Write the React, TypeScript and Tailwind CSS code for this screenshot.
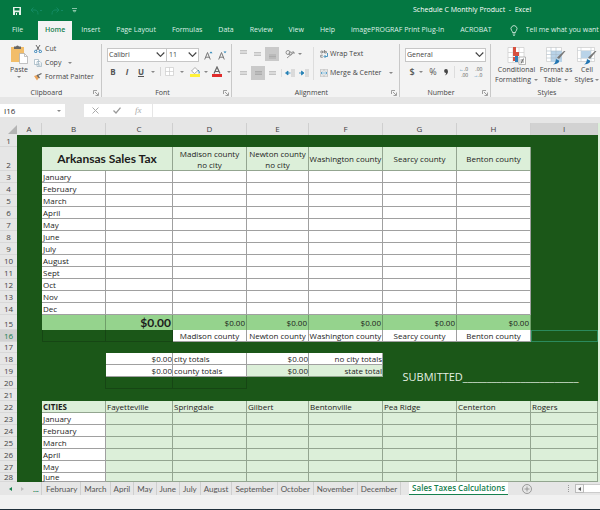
import type { ReactNode } from "react"

const ribbonTabs = [
  "File",
  "Home",
  "Insert",
  "Page Layout",
  "Formulas",
  "Data",
  "Review",
  "View",
  "Help",
  "imagePROGRAF Print Plug-In",
  "ACROBAT",
]

const sheetTabs = [
  "February",
  "March",
  "April",
  "May",
  "June",
  "July",
  "August",
  "September",
  "October",
  "November",
  "December",
]

const months = [
  "January",
  "February",
  "March",
  "April",
  "May",
  "June",
  "July",
  "August",
  "Sept",
  "Oct",
  "Nov",
  "Dec",
]

const columns = ["A", "B", "C", "D", "E", "F", "G", "H", "I"]

const counties = [
  "Madison county",
  "Newton county",
  "Washington county",
  "Searcy county",
  "Benton county",
]

const cities = [
  "Fayetteville",
  "Springdale",
  "Gilbert",
  "Bentonville",
  "Pea Ridge",
  "Centerton",
  "Rogers",
]

const grid = "border-r border-b border-[#a0a0a0]"
const greenGrid = "border-r border-b border-[#93a590] bg-[#dcefd9]"

function Launcher() {
  return (
    <svg className="size-[6px]" viewBox="0 0 6 6" fill="none" stroke="#888">
      <path d="M.5 4V.5H4M2 2l3 3M5.500 2.500v3h-3" strokeWidth=".8" />
    </svg>
  )
}

function Caret() {
  return (
    <svg className="h-[2px] w-[4px] shrink-0 fill-[#888]" viewBox="0 0 4 2">
      <path d="M0 0h4L2 2z" />
    </svg>
  )
}

function Chevron() {
  return (
    <svg
      className="pointer-events-none absolute top-1 right-[2px] h-[5px] w-[9px]"
      viewBox="0 0 9 5"
      fill="none"
      stroke="#444"
      strokeWidth="1.200"
    >
      <path d="M.7.5 4.500 4.300 8.300.5" />
    </svg>
  )
}

type GroupProps = {
  label: string
  className: string
  launcher?: boolean
  children: ReactNode
}

function Group({ label, className, launcher = true, children }: GroupProps) {
  return (
    <section
      aria-label={label}
      className={`flex shrink-0 flex-col border-r border-[#c8c8c8] ${className}`}
    >
      <div className="flex-1">{children}</div>
      <div className="flex h-[9px] items-center pr-[2px]">
        <span className="flex-1 text-center">{label}</span>
        {launcher ? (
          <button aria-label={`${label} settings`}>
            <Launcher />
          </button>
        ) : null}
      </div>
    </section>
  )
}

function AlignIcon({ y = 0 }: { y?: number }) {
  return (
    <svg className="size-[9px]" viewBox="0 0 9 9" stroke="#bdbdbd" strokeWidth=".9">
      <path d={`M1 ${2.5 + y}h7M1 ${4 + y}h7M1 ${5.5 + y}h7`} />
    </svg>
  )
}

function IndentIcon({ flip = false }: { flip?: boolean }) {
  return (
    <svg className="h-[8px] w-[10px]" viewBox="0 0 10 8">
      <path d="M6 1h4M6 3h4M6 5h4M6 7h4" stroke="#bdbdbd" strokeWidth=".9" />
      <path
        d={flip ? "M0 4h3M2.500 2 5 4 2.500 6z" : "M5.500 4H3M3 2 .5 4 3 6z"}
        fill="#2380b5"
        stroke="#2380b5"
        strokeWidth=".8"
      />
    </svg>
  )
}

function FontSizeIcon({ shrink = false }: { shrink?: boolean }) {
  return (
    <svg className="h-[9px] w-[9px]" viewBox="0 0 9 9">
      <path d="M.7 8.500 3.500 1.500l2.800 7M1.700 6.200h3.600" fill="none" stroke="#777" />
      <path d={shrink ? "M5.500.5h3L7 2.200z" : "M5.500 2.200h3L7 .5z"} fill="#2380b5" />
    </svg>
  )
}

function TitleBar() {
  return (
    <header className="flex h-[21px] shrink-0 items-center text-[7px] text-white">
      <div className="flex w-[413px] items-center gap-[9px] pl-[13px]">
        <button aria-label="Save">
          <svg className="size-[8px]" viewBox="0 0 8 8">
            <path d="M0 0h8v8H0z" fill="#e5f3eb" />
            <path d="M1.500 1h5v2.600h-5zM2 5.200h4V8H2z" fill="#047842" />
            <path d="M3 6h1v2H3z" fill="#e5f3eb" />
          </svg>
        </button>
        <button aria-label="Undo">
          <svg className="h-[8px] w-[12px]" viewBox="0 0 12 8" fill="none" stroke="#138a62">
            <path d="M3.500.5 1 3l2.500 2.500M1 3h4q3 0 3 4.500M10 3.500h2" />
          </svg>
        </button>
        <button aria-label="Redo">
          <svg className="h-[8px] w-[12px]" viewBox="0 0 12 8" fill="none" stroke="#138a62">
            <path d="M5.500.5 8 3 5.500 5.500M8 3H4Q1 3 1 7.500M10 3.500h2" />
          </svg>
        </button>
        <button aria-label="Customize toolbar">
          <svg className="size-[5px]" viewBox="0 0 5 5" fill="none" stroke="#a9d8c0">
            <path d="M0 .5h5M1 2.500h3L2.500 4.200z" strokeWidth=".8" />
          </svg>
        </button>
      </div>
      <h1 className="whitespace-pre">Schedule C Monthly Product  -  Excel</h1>
    </header>
  )
}

function RibbonTabs() {
  return (
    <nav className="flex h-[19px] shrink-0 items-stretch overflow-hidden pl-1 text-[7px] whitespace-nowrap text-[#dff0e7]">
      {ribbonTabs.map((tab) => (
        <button
          key={tab}
          className={
            tab === "Home"
              ? "mr-[1px] ml-[7px] bg-[#f3f3f3] px-[7px] font-semibold text-[#16804e]"
              : "px-2"
          }
        >
          {tab}
        </button>
      ))}
      <label className="flex min-w-0 flex-1 items-center gap-2 pl-[10px]">
        <svg className="h-[11px] w-[8px] shrink-0" viewBox="0 0 8 11" fill="none" stroke="#e5f3eb">
          <path d="M2.500 7.500Q2.500 6.300 1.500 5.300A3 3 0 1 1 6.500 5.300Q5.500 6.300 5.500 7.500zM2.700 9h2.600M3.200 10.400h1.600" strokeWidth=".8" />
        </svg>
        <input
          aria-label="Tell me"
          defaultValue="Tell me what you want"
          className="min-w-0 flex-1 outline-none"
        />
      </label>
    </nav>
  )
}

function Ribbon() {
  return (
    <div className="flex h-[57px] shrink-0 overflow-hidden bg-[#f3f3f3] pt-1 text-[7px] leading-[10px] whitespace-nowrap text-[#444]">
      <Group label="Clipboard" className="w-[102px]">
        <div className="flex gap-1 pl-2">
          <button className="flex w-[22px] flex-col items-center pt-[1px]">
            <svg className="h-[19px] w-[18px]" viewBox="0 0 18 19">
              <path d="M1 2h13v15H1z" fill="#f2bd69" />
              <path d="M4 1.500h2Q7.500-.5 9 1.500h2V4H4z" fill="#666" />
              <path d="M9.500 8.500h5l3 3V18.500h-8z" fill="#fff" stroke="#aaa" strokeWidth=".7" />
              <path d="M14.500 8.500v3h3" fill="none" stroke="#aaa" strokeWidth=".7" />
            </svg>
            <span className="my-[1px]">Paste</span>
            <Caret />
          </button>
          <div className="flex flex-col items-start gap-1">
            <button className="flex items-center gap-[3px]">
              <svg className="size-[8px]" viewBox="0 0 8 8" fill="none">
                <path d="M2 0l3.500 5.500M6 0L2.500 5.500" stroke="#666" />
                <circle cx="1.700" cy="6.500" r="1.200" stroke="#2f80b8" />
                <circle cx="6.300" cy="6.500" r="1.200" stroke="#2f80b8" />
              </svg>
              Cut
            </button>
            <button className="flex items-center gap-[3px]">
              <svg className="size-[8px]" viewBox="0 0 8 8" fill="#fff" stroke="#9ab0bd" strokeWidth=".7">
                <path d="M.5.5h4v5h-4zM3 2.500h3l1.500 1.500v3.500H3z" />
                <path d="M4 5h2.500M4 6.300h2.500" />
              </svg>
              Copy
              <span className="pl-1">
                <Caret />
              </span>
            </button>
            <button className="flex items-center gap-[3px]">
              <svg className="size-[8px]" viewBox="0 0 8 8">
                <path d="M0 3l3-1 2 2.500L3 7.500z" fill="#eba45a" />
                <path d="M3.500 2.500 7.500.5M3 2l2.500 3" stroke="#666" strokeWidth="1.200" />
              </svg>
              Format Painter
            </button>
          </div>
        </div>
      </Group>

      <Group label="Font" className="w-[130px]">
        <div className="flex items-center pt-1 pl-[5px]">
          <div className="relative">
            <select
              aria-label="Font name"
              className="h-[14px] w-[60px] appearance-none border border-[#c6c6c6] bg-white pl-[1px]"
            >
              <option>Calibri</option>
            </select>
            <Chevron />
          </div>
          <div className="relative">
            <select
              aria-label="Font size"
              className="h-[14px] w-[32px] appearance-none border border-l-0 border-[#c6c6c6] bg-white pl-[2px]"
            >
              <option>11</option>
            </select>
            <Chevron />
          </div>
          <button aria-label="Increase font size" className="pl-[5px]">
            <FontSizeIcon />
          </button>
          <button aria-label="Decrease font size" className="pl-[5px]">
            <FontSizeIcon shrink />
          </button>
        </div>
        <div className="flex items-center pt-1 pl-1 text-[8px] text-[#555]">
          <button className="w-[14px] font-bold">B</button>
          <button className="w-[14px] font-bold italic">I</button>
          <button className="w-[14px] font-bold underline">U</button>
          <button aria-label="Underline style" className="px-[3px]">
            <Caret />
          </button>
          <button aria-label="Borders" className="ml-[2px] flex items-center gap-[6px] border-l border-[#d6d6d6] pl-1">
            <svg className="size-[9px]" viewBox="0 0 9 9" fill="#fff" stroke="#ccc">
              <path d="M.5.5h8v8h-8zM4.500.5v8M.5 4.500h8" strokeWidth=".7" />
            </svg>
            <Caret />
          </button>
          <button aria-label="Fill color" className="ml-[6px] flex items-center gap-1">
            <svg className="h-[11px] w-[10px]" viewBox="0 0 10 11">
              <path d="M1.500 5 5 1.500l3 3L4.500 7.500z" fill="#fff" stroke="#999" strokeWidth=".8" />
              <path d="M8 4q2 2 1 3.500" stroke="#2f80b8" fill="none" />
              <path d="M0 8h10v3H0z" fill="#fff23a" />
            </svg>
            <Caret />
          </button>
          <button aria-label="Font color" className="ml-1 flex items-center gap-[5px]">
            <svg className="h-[11px] w-[10px]" viewBox="0 0 10 11">
              <path d="M2 7.500 5 1l3 6.500M3 5.500h4" fill="none" stroke="#666" strokeWidth="1.200" />
              <path d="M0 8h10v3H0z" fill="#e02b2b" />
            </svg>
            <Caret />
          </button>
        </div>
      </Group>

      <Group label="Alignment" className="w-[168px]">
        <div className="flex pt-[3px] pl-[5px]">
          <div className="flex flex-col gap-[5px]">
            <div className="flex items-center gap-[1px] pr-1">
              <button aria-label="Top align" className="grid size-[13px] place-items-center">
                <AlignIcon y={-2} />
              </button>
              <button aria-label="Middle align" className="grid size-[13px] place-items-center">
                <AlignIcon />
              </button>
              <button aria-label="Bottom align" className="grid size-[14px] place-items-center bg-[#c9c9c9]">
                <svg className="size-[9px]" viewBox="0 0 9 9" stroke="#a8a8a8" strokeWidth=".9">
                  <path d="M1 5h7M1 6.500h7M1 8h7" />
                </svg>
              </button>
              <button aria-label="Orientation" className="ml-1 flex items-center gap-[3px] pl-[1px]">
                <svg className="size-[10px]" viewBox="0 0 10 10" fill="none" stroke="#888" strokeWidth=".9">
                  <circle cx="3" cy="3.500" r="2" />
                  <circle cx="5.500" cy="4.500" r="1.500" />
                  <path d="M2 9l7-6M7 3h2v2" />
                </svg>
                <Caret />
              </button>
            </div>
            <div className="flex items-center gap-[1px]">
              <button aria-label="Align left" className="grid size-[13px] place-items-center">
                <AlignIcon />
              </button>
              <button aria-label="Center" className="grid size-[14px] place-items-center bg-[#c9c9c9]">
                <svg className="size-[9px]" viewBox="0 0 9 9" stroke="#a8a8a8" strokeWidth=".9">
                  <path d="M1 2.500h7M1 4h7M1 5.500h7" />
                </svg>
              </button>
              <button aria-label="Align right" className="grid size-[13px] place-items-center">
                <AlignIcon />
              </button>
              <button aria-label="Decrease indent" className="ml-[1px] border-l border-[#ddd] pl-[3px]">
                <IndentIcon />
              </button>
              <button aria-label="Increase indent" className="pl-[3px]">
                <IndentIcon flip />
              </button>
            </div>
          </div>
          <div className="ml-1 flex flex-col items-start gap-[9px] border-l border-[#ddd] pt-[2px] pl-[6px]">
            <button className="flex items-center gap-[2px]">
              <svg className="size-[8px]" viewBox="0 0 8 8" fill="none" stroke="#777">
                <circle cx="1.700" cy="2" r="1" strokeWidth=".8" />
                <path d="M3 .8V3M4.500 0v3h1.800V1.400H4.500M2.800 5.200H.7v2h2.100" strokeWidth=".8" />
                <path d="M7.500 3v3.500H4.500M5.500 5l-1.500 1.500L5.500 8" stroke="#2380b5" strokeWidth=".8" />
              </svg>
              Wrap Text
            </button>
            <button className="flex items-center gap-[2px]">
              <svg className="size-[8px]" viewBox="0 0 8 8" fill="#fff" stroke="#aaa" strokeWidth=".6">
                <path d="M.3.3h7.400v7.400H.3zM4 .3V2M4 6v1.700M.3 2h7.400M.3 6h7.400" />
                <path d="M1 4h6M2.200 2.800 1 4l1.200 1.200M5.800 2.800 7 4 5.800 5.200" stroke="#2380b5" fill="none" />
              </svg>
              Merge &amp; Center
              <span className="pl-[6px]">
                <Caret />
              </span>
            </button>
          </div>
        </div>
      </Group>

      <Group label="Number" className="w-[91px]">
        <div className="relative w-[86px] pt-1 pl-[5px]">
          <select
            aria-label="Number format"
            className="h-[14px] w-full appearance-none border border-[#c6c6c6] bg-white pl-[1px]"
          >
            <option>General</option>
          </select>
          <span className="absolute top-1 right-0">
            <Chevron />
          </span>
        </div>
        <div className="flex h-[20px] items-center pl-2 text-[9px] text-[#555]">
          <button className="w-[8px] font-semibold">$</button>
          <button aria-label="Currency" className="px-[3px]">
            <Caret />
          </button>
          <button className="w-[14px]">%</button>
          <button aria-label="Comma style" className="w-[12px]">
            <svg className="mx-auto h-[7px] w-[4px]" viewBox="0 0 4 7">
              <circle cx="2" cy="2" r="1.900" fill="#444" />
              <path d="M3.900 2Q4 5.500.8 6.500 2.500 5 2 3z" fill="#444" />
            </svg>
          </button>
          <button aria-label="Increase decimal" className="ml-[2px] border-l border-[#ddd] pl-1 text-right text-[5px] leading-[6px]">
            <span className="text-[#2380b5]">←</span>.0
            <br />
            .00
          </button>
          <button aria-label="Decrease decimal" className="ml-[5px] text-right text-[5px] leading-[6px]">
            .00
            <br />
            <span className="text-[#2380b5]">→</span>.0
          </button>
        </div>
      </Group>

      <Group label="Styles" className="w-[115px]" launcher={false}>
        <div className="flex items-start pt-[3px] pl-1">
          <button className="w-[43px]">
            <svg className="mx-auto h-[18px] w-[19px]" viewBox="0 0 19 18">
              <path d="M1 .5h16v15H1zM1 5.500h16M1 10.500h16M6 .5v15M12 .5v15" fill="#fff" stroke="#ccc" strokeWidth=".7" />
              <path d="M6 0h3v5H6zM6 10h2v4H6z" fill="#d6503f" />
              <path d="M6 5h6v4H6z" fill="#d6503f" />
              <path d="M8 9h3v6H8z" fill="#2f80b8" />
              <path d="M12 10h6.500v7.500H12z" fill="#fff" stroke="#999" strokeWidth=".7" />
              <path d="M13.500 13h3.500M13.500 15h3.500M14 16.500l2.500-5" stroke="#555" strokeWidth=".7" />
            </svg>
            Conditional
            <span className="flex items-center justify-center gap-[3px]">
              Formatting <Caret />
            </span>
          </button>
          <button className="w-[36px]">
            <svg className="mx-auto h-[18px] w-[20px]" viewBox="0 0 20 18">
              <path d="M.5.5h15v14H.5z" fill="#fff" stroke="#ccc" strokeWidth=".7" />
              <path d="M5 4h11v11H5z" fill="#b9d3e8" />
              <path d="M.5 4h15M.5 7.500h15M.5 11h15M5 .5v14M10 .5v14" stroke="#a9bccb" strokeWidth=".6" />
              <path d="M19.500 4 13 12l-2-1.500L18 4z" fill="#777" />
              <path d="M7 17.500q2.500-1 3-5.500l3 1.500q1 3-6 4z" fill="#2376b2" />
            </svg>
            Format as
            <span className="flex items-center justify-center gap-[3px]">
              Table <Caret />
            </span>
          </button>
          <button className="w-[26px]">
            <svg className="mx-auto h-[18px] w-[20px]" viewBox="0 0 20 18">
              <path d="M.5.5h17v14H.5z" fill="#fff" stroke="#ccc" strokeWidth=".7" />
              <path d="M4 4h10v7H4z" fill="#b9d3e8" />
              <path d="M.5 3.500h17M.5 11.500h17M4 .5v14M14 .5v14" stroke="#c3ccd3" strokeWidth=".6" />
              <path d="M19.500 4 13 12l-2-1.500L18 4z" fill="#777" />
              <path d="M7 17.500q2.500-1 3-5.500l3 1.500q1 3-6 4z" fill="#2376b2" />
            </svg>
            Cell
            <span className="flex items-center justify-center gap-[2px]">
              Styles <Caret />
            </span>
          </button>
        </div>
      </Group>
    </div>
  )
}

function FormulaBar() {
  return (
    <div className="flex h-[26px] shrink-0 items-center bg-[#e6e6e6] pt-[1px] text-[7px] text-[#333]">
      <div className="flex h-[13px] w-[65px] items-center bg-white pr-1">
        <input aria-label="Name box" defaultValue="I16" className="min-w-0 flex-1 pl-1 text-[8px] outline-none" />
        <Caret />
      </div>
      <div className="ml-[19px] flex h-[13px] w-[68px] items-center gap-[14px] bg-white pl-2">
        <button aria-label="Cancel">
          <svg className="size-[7px]" viewBox="0 0 7 7" stroke="#aaa">
            <path d="M.5.5l6 6M6.500.5l-6 6" />
          </svg>
        </button>
        <button aria-label="Enter">
          <svg className="h-[7px] w-[8px]" viewBox="0 0 8 7" fill="none" stroke="#999" strokeWidth="1.300">
            <path d="M.5 3.500 3 6 7.500.7" />
          </svg>
        </button>
        <button className="font-['Liberation_Serif',serif] text-[9px] text-[#aaa] italic">fx</button>
      </div>
      <input aria-label="Formula" className="ml-[1px] h-[13px] min-w-0 flex-1 bg-white px-1 outline-none" />
    </div>
  )
}

type RowProps = {
  n: number
  className?: string
  children?: ReactNode
}

function Row({ n, className = "h-[12px]", children }: RowProps) {
  return (
    <tr className={className}>
      <th
        scope="row"
        className={`border-b border-[#d8d8d8] align-bottom font-normal ${
          n === 16 ? "bg-[#d2d2d2] text-[#16804e]" : "bg-[#e6e6e6] text-[#444]"
        }`}
      >
        {n}
      </th>
      <td />
      {children}
    </tr>
  )
}

function Sheet() {
  return (
    <main className="min-h-0 flex-1 overflow-hidden border-r-2 border-[#dcefd9] bg-[#1b5718]">
      <table className="w-full table-fixed border-separate border-spacing-0 text-[8px] leading-[10px] whitespace-nowrap text-[#1c1c1c]">
        <colgroup>
          <col className="w-[17px]" />
          <col className="w-[25px]" />
          <col className="w-[64px]" />
          <col className="w-[67px]" />
          <col className="w-[74px]" />
          <col className="w-[62px]" />
          <col className="w-[74px]" />
          <col className="w-[74px]" />
          <col className="w-[74px]" />
          <col />
        </colgroup>
        <thead className="bg-[#e6e6e6] text-[#444]">
          <tr className="h-[12px]">
            <td>
              <svg className="ml-auto size-[9px]" viewBox="0 0 9 9">
                <path d="M9 0v9H0z" fill="#b4b4b4" />
              </svg>
            </td>
            {columns.map((column) => (
              <th
                key={column}
                scope="col"
                className={`border-r border-[#cfcfcf] font-normal ${column === "I" ? "bg-[#d2d2d2]" : ""}`}
              >
                {column}
              </th>
            ))}
          </tr>
        </thead>
        <tbody>
          <Row n={1}>
            <td colSpan={8} />
          </Row>
          <Row n={2} className="h-[24px]">
            <th
              colSpan={2}
              className={`${greenGrid} font-[Lato,sans-serif] text-[12px] font-bold`}
            >
              Arkansas Sales Tax
            </th>
            {counties.map((county, index) => (
              <th key={county} scope="col" className={`${greenGrid} leading-[11px] font-normal`}>
                {county}
                {index < 2 ? (
                  <>
                    <br />
                    no city
                  </>
                ) : null}
              </th>
            ))}
          </Row>
          {months.map((month, index) => (
            <Row key={month} n={index + 3}>
              <td className={`${grid} bg-white pl-[1px]`}>{month}</td>
              {["C", "D", "E", "F", "G", "H"].map((column) => (
                <td key={column} className={`${grid} bg-white`} />
              ))}
            </Row>
          ))}
          <Row n={15} className="h-[15px]">
            <td className="border-r border-[#6f9e69] bg-[#95d38d]" />
            <td className="border-r border-[#6f9e69] bg-[#95d38d] pr-[1px] text-right font-[Lato,sans-serif] text-[12px] leading-[14px] font-bold">
              $0.00
            </td>
            {counties.map((county) => (
              <td
                key={county}
                className="border-r border-[#6f9e69] bg-[#95d38d] pr-[1px] text-right"
              >
                $0.00
              </td>
            ))}
          </Row>
          <Row n={16}>
            <td className="border border-t-0 border-[#164614]" />
            <td className="border-r border-b border-[#164614]" />
            {counties.map((county) => (
              <td key={county} className={`${grid} bg-white text-center`}>
                {county}
              </td>
            ))}
            <td className="border border-[#2b8a5c]" />
          </Row>
          <Row n={17} className="h-[11px]">
            <td colSpan={8} />
          </Row>
          <Row n={18}>
            <td />
            <td className={`${grid} bg-white text-right`}>$0.00</td>
            <td className={`${grid} bg-white pl-[1px]`}>city totals</td>
            <td className={`${grid} bg-white text-right`}>$0.00</td>
            <td className={`${grid} bg-white text-right`}>no city totals</td>
            <td
              colSpan={3}
              rowSpan={4}
              className="text-center text-[11px] text-[#e4f0e2]"
            >
              SUBMITTED________________________
            </td>
          </Row>
          <Row n={19}>
            <td />
            <td className={`${grid} bg-white text-right`}>$0.00</td>
            <td className={`${grid} bg-white pl-[1px]`}>county totals</td>
            <td className={`${greenGrid} text-right`}>$0.00</td>
            <td className={`${greenGrid} text-right`}>state total</td>
          </Row>
          <Row n={20}>
            <td className="border-r border-[#164614]" />
            <td className="border-r border-b border-[#164614]" />
            <td className="border-r border-b border-[#164614]" />
            <td colSpan={2} />
          </Row>
          <Row n={21}>
            <td colSpan={5} />
          </Row>
          <Row n={22}>
            <th scope="col" className={`${greenGrid} pl-[1px] text-left font-bold`}>
              CITIES
            </th>
            {cities.map((city) => (
              <th key={city} scope="col" className={`${greenGrid} pl-[1px] text-left font-normal`}>
                {city}
              </th>
            ))}
          </Row>
          {months.slice(0, 6).map((month, index) => (
            <Row
              key={month}
              n={index + 23}
              className={index === 5 ? "h-[9px] leading-[8px]" : "h-[12px]"}
            >
              <td className={`${grid} bg-white pl-[1px]`}>{month}</td>
              {cities.map((city) => (
                <td key={city} className={greenGrid} />
              ))}
            </Row>
          ))}
        </tbody>
      </table>
    </main>
  )
}

function SheetTabs() {
  return (
    <nav className="flex h-[13px] shrink-0 items-stretch overflow-hidden bg-[#e6e6e6] font-[Lato,sans-serif] text-[8px] leading-[12px] whitespace-nowrap text-[#555]">
      <div className="flex w-[42px] items-center gap-[9px] border-r border-[#cfcfcf] pl-[9px]">
        <button aria-label="Previous sheet">
          <svg className="h-[4px] w-[3px]" viewBox="0 0 3 4">
            <path d="M3 0v4L0 2z" fill="#16804e" />
          </svg>
        </button>
        <button aria-label="Next sheet">
          <svg className="h-[4px] w-[3px]" viewBox="0 0 3 4">
            <path d="M0 0v4l3-2z" fill="#bdbdbd" />
          </svg>
        </button>
        <button className="font-bold text-[#16804e]">...</button>
      </div>
      {sheetTabs.map((tab) => (
        <button key={tab} className="border-r border-[#cfcfcf] px-[3px] first-of-type:pl-1 last:pr-1">
          {tab}
        </button>
      ))}
      <button className="ml-2 border-b border-[#16804e] bg-white px-[3px] font-['Open_Sans',sans-serif] font-semibold text-[#16804e]">
        Sales Taxes Calculations
      </button>
      <button aria-label="New sheet" className="ml-[14px]">
        <svg className="size-[10px]" viewBox="0 0 10 10" fill="none" stroke="#888" strokeWidth=".8">
          <circle cx="5" cy="5" r="4.500" />
          <path d="M5 2.500v5M2.500 5h5" />
        </svg>
      </button>
      <div className="ml-auto flex items-center">
        <span className="mr-[6px] h-[7px] border-l border-dotted border-[#999]" />
        <button aria-label="Scroll left" className="grid h-[9px] w-[9px] place-items-center border border-[#bbb] bg-[#f6f6f6]">
          <svg className="h-[4px] w-[3px]" viewBox="0 0 3 4">
            <path d="M3 0v4L0 2z" fill="#555" />
          </svg>
        </button>
        <div className="h-[9px] w-[16px] border-y border-[#ccc] bg-white" />
      </div>
    </nav>
  )
}

export default function App() {
  return (
    <div className="flex h-screen flex-col overflow-hidden bg-[#047842] font-['Open_Sans',sans-serif]">
      <TitleBar />
      <RibbonTabs />
      <Ribbon />
      <FormulaBar />
      <Sheet />
      <SheetTabs />
      <footer className="h-[15px] shrink-0 border-b border-[#1f2f3a] bg-[#f1f1f1]" />
    </div>
  )
}
